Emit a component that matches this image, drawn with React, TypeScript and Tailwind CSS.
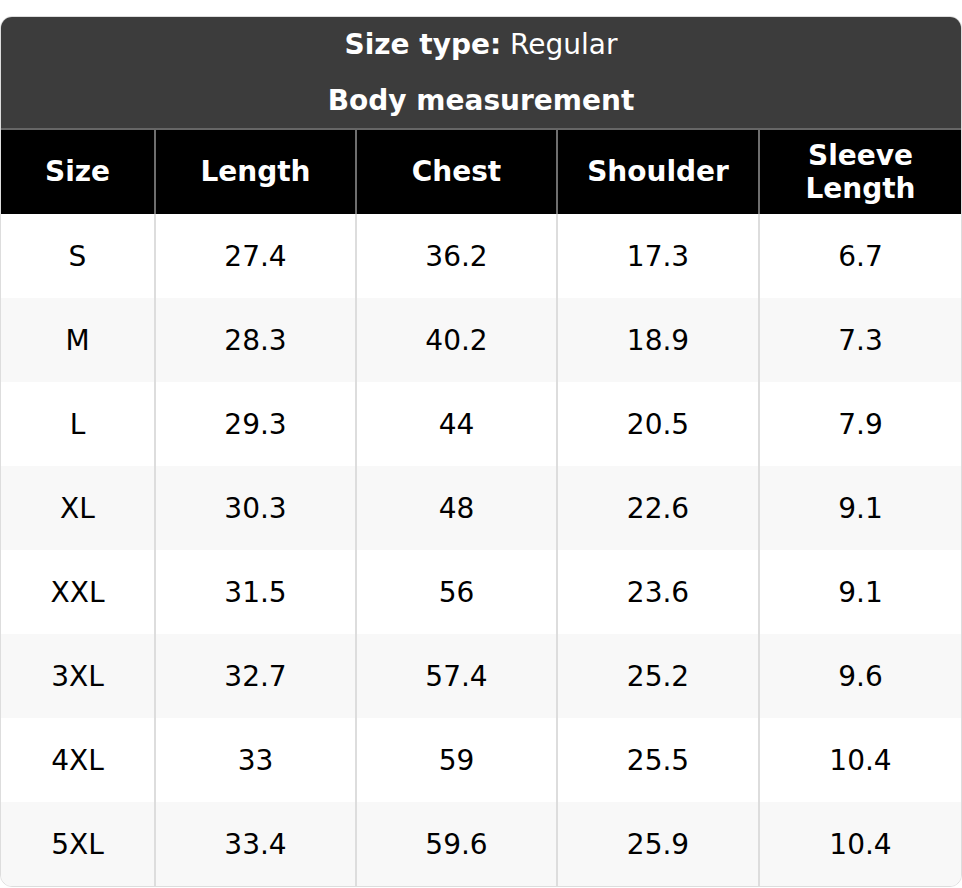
import React from "react";

const rows: string[][] = [
  ["S", "27.4", "36.2", "17.3", "6.7"],
  ["M", "28.3", "40.2", "18.9", "7.3"],
  ["L", "29.3", "44", "20.5", "7.9"],
  ["XL", "30.3", "48", "22.6", "9.1"],
  ["XXL", "31.5", "56", "23.6", "9.1"],
  ["3XL", "32.7", "57.4", "25.2", "9.6"],
  ["4XL", "33", "59", "25.5", "10.4"],
  ["5XL", "33.4", "59.6", "25.9", "10.4"],
];

const widths = ["w-[153px]", "w-[201px]", "w-[201px]", "w-[202px]", "w-[203px]"];

export default function App() {
  return (
    <div className="bg-white pt-4 font-['DejaVu_Sans',sans-serif] text-[28px] leading-[1.18]">
      <div className="w-[962px] overflow-hidden rounded-[12px] border border-[#dddddd]">
        <div className="border-b-2 border-[#666666] bg-[#3c3c3c] text-white">
          <div className="flex h-[56px] items-center justify-center">
            <span className="font-bold">Size type:</span>
            <span>&nbsp;Regular</span>
          </div>
          <div className="flex h-[55px] items-center justify-center font-bold">Body measurement</div>
        </div>
        <table className="w-full table-fixed border-separate border-spacing-0">
          <colgroup>
            {widths.map((w, i) => (
              <col key={i} className={w} />
            ))}
          </colgroup>
          <thead>
            <tr>
              {["Size", "Length", "Chest", "Shoulder", "Sleeve Length"].map((h, i) => (
                <th
                  key={h}
                  className={`h-[84px] bg-black px-6 text-center font-bold text-white ${
                    i > 0 ? "border-l-2 border-[#6e6e6e]" : ""
                  }`}
                >
                  {h}
                </th>
              ))}
            </tr>
          </thead>
          <tbody>
            {rows.map((r, ri) => (
              <tr key={r[0]} className={ri % 2 === 1 ? "bg-[#f8f8f8]" : "bg-white"}>
                {r.map((c, ci) => (
                  <td
                    key={ci}
                    className={`h-[84px] pt-[1px] text-center text-black ${ci > 0 ? "border-l-2 border-[#dddddd]" : ""}`}
                  >
                    {c}
                  </td>
                ))}
              </tr>
            ))}
          </tbody>
        </table>
      </div>
    </div>
  );
}
